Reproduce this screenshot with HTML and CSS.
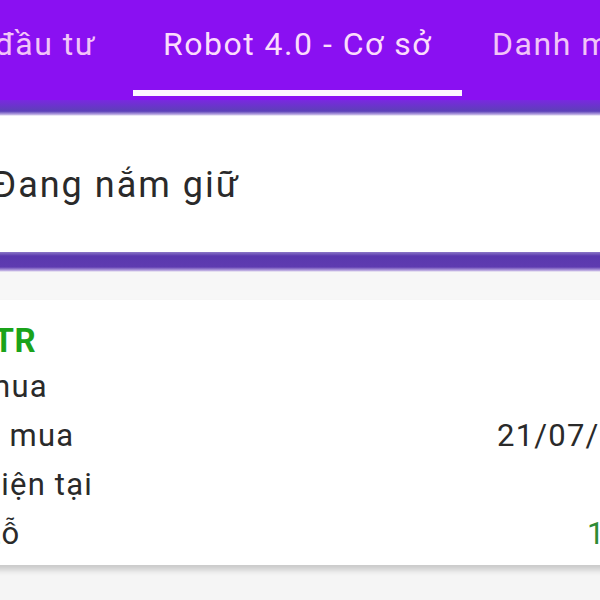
FILE: index.html
```html
<!DOCTYPE html>
<html lang="vi">
<head>
    <meta charset="UTF-8">
    <meta name="viewport" content="width=device-width, initial-scale=1.0">
    <title>Robot 4.0 - Cơ sở</title>
    <link rel="stylesheet" href="styles.css">
</head>
<body>
    <nav class="tabs">
        <div class="tab tab-first">
            <span class="tab-label">Danh mục đầu tư</span>
            <span class="tab-line"></span>
        </div>
        <div class="tab tab-active">
            <span class="tab-label">Robot 4.0 - Cơ sở</span>
            <span class="tab-line"></span>
        </div>
        <div class="tab">
            <span class="tab-label">Danh mục theo dõi</span>
            <span class="tab-line"></span>
        </div>
    </nav>
    <div class="bar-shadow"></div>

    <div class="content">
        <section class="holding-head">
            <h2>Đang nắm giữ</h2>
        </section>
        <div class="divider"></div>

        <div class="stock-list">
            <div class="stock-card">
                <div class="stock-code">CTR</div>
                <div class="stock-row">
                    <span>Giá mua</span>
                </div>
                <div class="stock-row">
                    <span>Ngày mua</span>
                    <span>21/07/2021</span>
                </div>
                <div class="stock-row">
                    <span>Giá hiện tại</span>
                </div>
                <div class="stock-row">
                    <span>Lãi/Lỗ</span>
                    <span class="profit">12,5%</span>
                </div>
            </div>
        </div>
    </div>
</body>
</html>
```

FILE: styles.css
```css
body {
    margin: 0;
    font-family: Roboto, "Noto Sans", sans-serif;
    background: #f5f5f5;
    overflow: hidden;
    width: 600px;
    height: 600px;
}
.tabs {
    display: flex;
    height: 100px;
    background: #8a10f2;
    white-space: nowrap;
}
.tab {
    flex-shrink: 0;
    display: flex;
    flex-direction: column;
    align-items: center;
    padding: 24px 30px 0 30px;
    color: #f2c4f8;
    font-size: 32px;
    letter-spacing: 1.5px;
}
.tab-first {
    width: 96px;
    padding-left: 0;
    padding-right: 37px;
    align-items: flex-end;
}
.tab-label {
    line-height: 40px;
}
.tab-line {
    align-self: stretch;
    height: 6px;
    margin-top: 26px;
}
.tab-active {
    color: #fbdcfc;
}
.tab-active .tab-line {
    background: #fdf4ff;
    margin-left: -30px;
    margin-right: -30px;
}
.bar-shadow {
    height: 16px;
    background: linear-gradient(#7a28e0, #5c40b8 70%, #b8a8e0 90%, #ffffff);
}
.content {
    margin-left: -91px;
    width: 781px;
}
.holding-head {
    background: #ffffff;
    padding: 47px 0 45px 83px;
}
.holding-head h2 {
    margin: 0;
    font-size: 36px;
    font-weight: normal;
    line-height: 44px;
    color: #2a2a2a;
    letter-spacing: 2px;
}
.divider {
    height: 20px;
    background: linear-gradient(#8c78c8, #5a38ae 20%, #5e3bb0 75%, #b9a7e0 92%, #f7f7f7);
}
.stock-list {
    background: #f7f7f7;
    padding-top: 28px;
}
.stock-card {
    background: #ffffff;
    padding: 19px 16px 7px 16px;
    box-shadow: 0 5px 6px rgba(0, 0, 0, 0.18);
    color: #2a2a2a;
    font-size: 31px;
    letter-spacing: 1.2px;
}
.stock-code {
    margin-left: 47px;
    font-size: 33px;
    font-weight: bold;
    line-height: 43px;
    letter-spacing: 0.5px;
    color: #1aa31a;
}
.stock-row {
    display: flex;
    justify-content: space-between;
    line-height: 49px;
}
.profit {
    color: #2e8b35;
}
```
